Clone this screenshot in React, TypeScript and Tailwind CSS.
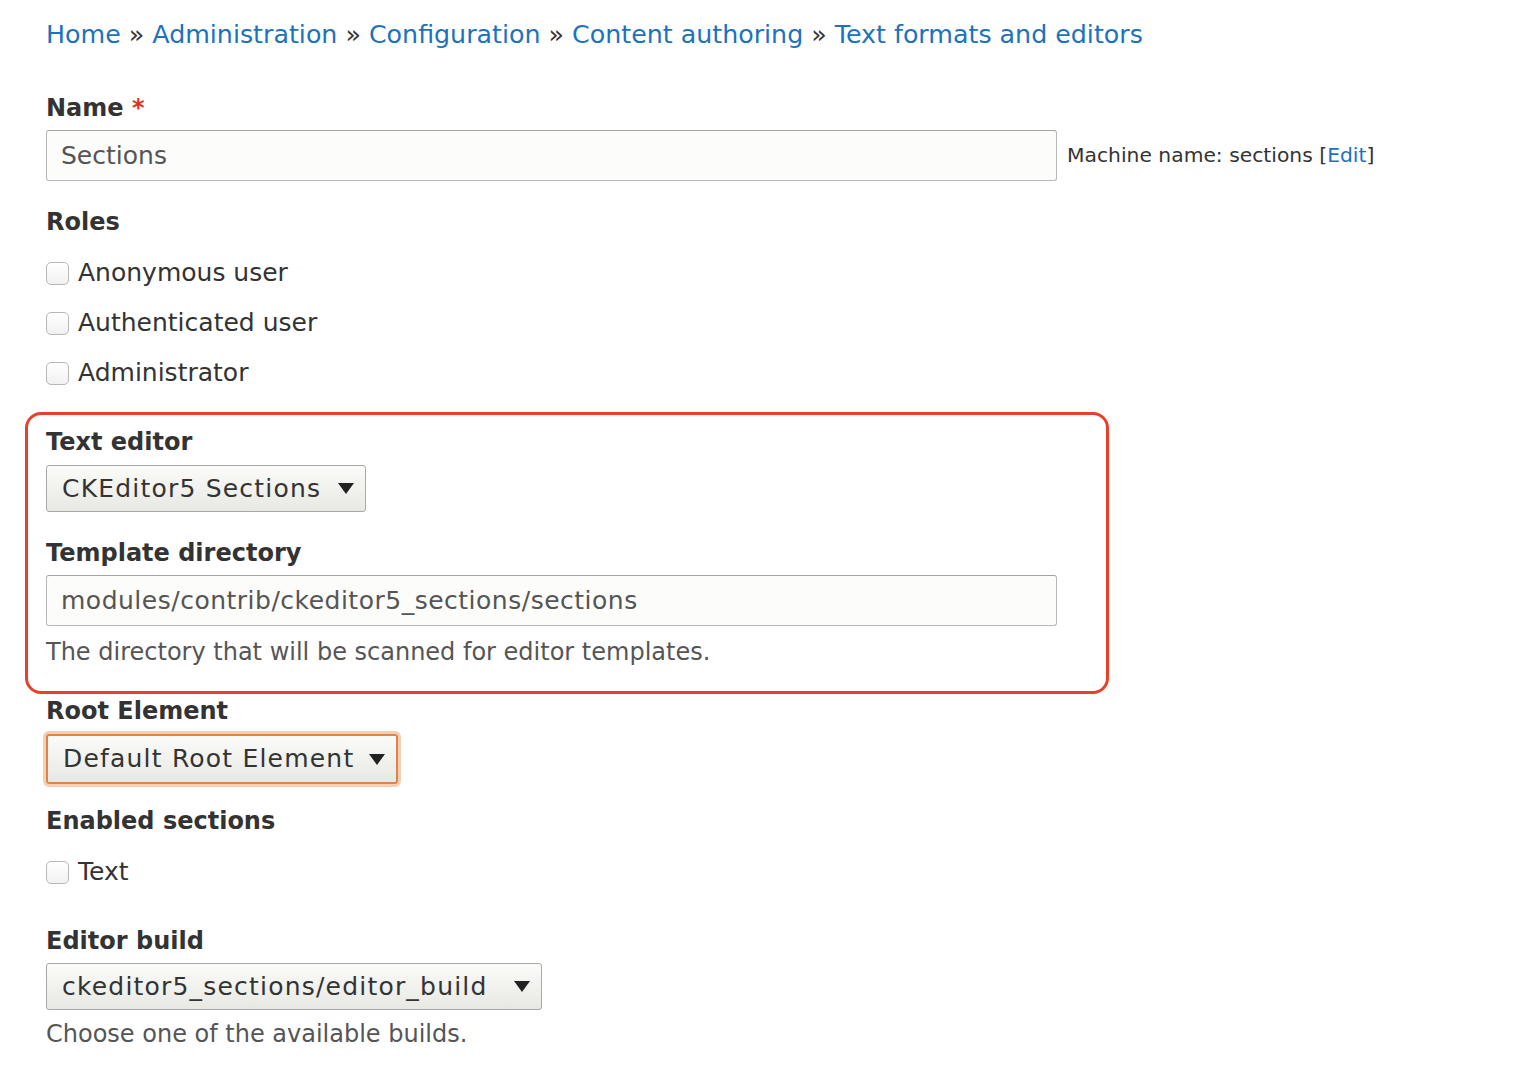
import React from 'react';

const crumbs = ['Home', 'Administration', 'Configuration', 'Content authoring', 'Text formats and editors'];

const Arrow = () => (
  <svg width="16" height="11" viewBox="0 0 16 11" className="shrink-0">
    <path d="M0 0 L16 0 L8 11 Z" fill="#222" />
  </svg>
);

const Label = ({ children, className = '' }: { children: React.ReactNode; className?: string }) => (
  <div className={`h-[30px] leading-[30px] text-[24px] font-bold text-[#333] ${className}`}>{children}</div>
);

const Checkbox = ({ label }: { label: string }) => (
  <label className="flex h-[50px] items-center">
    <span className="h-[23px] w-[23px] rounded-[5px] border border-[#b8b8b8] bg-gradient-to-b from-white to-[#f1f1f1]" />
    <span className="ml-[9px] text-[25px] text-[#333]">{label}</span>
  </label>
);

const Select = ({ value, width, focused = false }: { value: string; width: string; focused?: boolean }) => (
  <div
    className={`flex items-center justify-between rounded-[3px] bg-gradient-to-b from-[#fbfbf9] to-[#e8e8e3] pl-[15px] pr-[11px] text-[25px] tracking-[1.2px] text-[#333] ${width} ${
      focused ? 'h-[50px] border-2 border-[#d9854c] shadow-[0_0_0_3px_#f6cfb0]' : 'h-[47px] border border-[#a8a8a8]'
    }`}
  >
    <span>{value}</span>
    <Arrow />
  </div>
);

const TextInput = ({ value, wide = false }: { value: string; wide?: boolean }) => (
  <div
    className={`flex h-[51px] w-[1011px] items-center rounded-[3px] border border-[#b8b8b8] border-t-[#a3a3a3] bg-[#fcfcfa] pl-[14px] text-[25px] text-[#555] ${
      wide ? 'tracking-[0.5px]' : ''
    }`}
  >
    {value}
  </div>
);

export default function App() {
  return (
    <div className="min-h-screen bg-white pl-[46px] pt-[20px]" style={{ fontFamily: '"DejaVu Sans", sans-serif' }}>
      <nav className="h-[30px] leading-[30px] text-[25.3px]">
        {crumbs.map((c, i) => (
          <span key={c}>
            {i > 0 && <span className="text-[#333]"> » </span>}
            <a className="text-[#1d72bd]">{c}</a>
          </span>
        ))}
      </nav>

      <Label className="mt-[43px]">
        Name <span className="text-[#e0321f]">*</span>
      </Label>
      <div className="mt-[7px] flex items-center">
        <TextInput value="Sections" />
        <span className="ml-[10px] text-[20.3px] text-[#333]">
          Machine name: sections [<a className="text-[#1d72bd]">Edit</a>]
        </span>
      </div>

      <Label className="mt-[26px]">Roles</Label>
      <div className="mt-[11px] flex flex-col">
        <Checkbox label="Anonymous user" />
        <Checkbox label="Authenticated user" />
        <Checkbox label="Administrator" />
      </div>

      <div className="-ml-[21px] mt-[14px] w-[1084px] rounded-[16px] border-[3px] border-[#e8402a] pb-[24px] pl-[18px] pt-[12px]">
        <Label>Text editor</Label>
        <div className="mt-[8px]">
          <Select value="CKEditor5 Sections" width="w-[320px]" />
        </div>
        <Label className="mt-[26px]">Template directory</Label>
        <div className="mt-[7px]">
          <TextInput value="modules/contrib/ckeditor5_sections/sections" wide />
        </div>
        <div className="mt-[11px] h-[30px] leading-[30px] text-[24px] text-[#555]">
          The directory that will be scanned for editor templates.
        </div>
      </div>

      <Label className="mt-[2px]">Root Element</Label>
      <div className="mt-[8px]">
        <Select value="Default Root Element" width="w-[352px]" focused />
      </div>

      <Label className="mt-[22px]">Enabled sections</Label>
      <div className="mt-[11px]">
        <Checkbox label="Text" />
      </div>

      <Label className="mt-[29px]">Editor build</Label>
      <div className="mt-[7px]">
        <Select value="ckeditor5_sections/editor_build" width="w-[496px]" />
      </div>
      <div className="mt-[9px] h-[30px] pb-[16px] leading-[30px] text-[24px] text-[#555]">
        Choose one of the available builds.
      </div>
    </div>
  );
}
